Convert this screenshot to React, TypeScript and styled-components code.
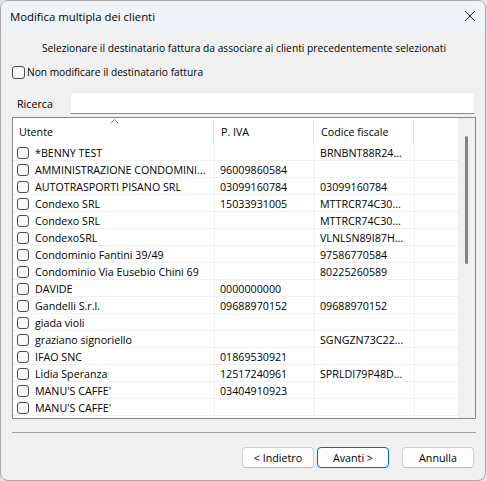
import styled, { createGlobalStyle } from "styled-components";

const GlobalStyle = createGlobalStyle`
  html, body {
    margin: 0;
    padding: 0;
    background: #e4e4e4;
  }
  body {
    font-family: "Open Sans", "Noto Sans", sans-serif;
    color: #000;
  }
`;

const FONT = `"Open Sans", "Noto Sans", sans-serif`;

type Row = {
  name: string;
  piva: string;
  cf: string;
};

const ROWS: Row[] = [
  { name: "*BENNY TEST", piva: "", cf: "BRNBNT88R24..." },
  { name: "AMMINISTRAZIONE CONDOMINI...", piva: "96009860584", cf: "" },
  { name: "AUTOTRASPORTI PISANO SRL", piva: "03099160784", cf: "03099160784" },
  { name: "Condexo SRL", piva: "15033931005", cf: "MTTRCR74C30..." },
  { name: "Condexo SRL", piva: "", cf: "MTTRCR74C30..." },
  { name: "CondexoSRL", piva: "", cf: "VLNLSN89I87H..." },
  { name: "Condominio Fantini 39/49", piva: "", cf: "97586770584" },
  { name: "Condominio Via Eusebio Chini 69", piva: "", cf: "80225260589" },
  { name: "DAVIDE", piva: "0000000000", cf: "" },
  { name: "Gandelli S.r.l.", piva: "09688970152", cf: "09688970152" },
  { name: "giada violi", piva: "", cf: "" },
  { name: "graziano signoriello", piva: "", cf: "SGNGZN73C22..." },
  { name: "IFAO SNC", piva: "01869530921", cf: "" },
  { name: "Lidia Speranza", piva: "12517240961", cf: "SPRLDI79P48D..." },
  { name: "MANU'S CAFFE'", piva: "03404910923", cf: "" },
  { name: "MANU'S CAFFE'", piva: "", cf: "" },
];

const COLS = "202px 100px 100px 43px";

const Window = styled.div`
  box-sizing: border-box;
  width: 486px;
  height: 481px;
  border: 1px solid #a9a9a9;
  border-radius: 8px;
  overflow: hidden;
  background: #f0f0f0;
  display: flex;
  flex-direction: column;
`;

const TitleBar = styled.div`
  height: 30px;
  flex: none;
  background: #eff4f9;
  display: flex;
  align-items: center;
  justify-content: space-between;
  padding: 0 8px 0 9px;
`;

const Title = styled.div`
  font-family: ${FONT};
  font-size: 11.35px;
  color: #000;
`;

const CloseButton = styled.div`
  width: 14px;
  height: 14px;
  display: flex;
  align-items: center;
  justify-content: center;
`;

const Content = styled.div`
  flex: 1;
  display: flex;
  flex-direction: column;
  padding: 0 9px 0 11px;
`;

const Instruction = styled.div`
  margin-top: 9px;
  height: 16px;
  line-height: 16px;
  text-align: center;
  font-family: ${FONT};
  font-size: 10.25px;
`;

const CheckRow = styled.label`
  margin-top: 9px;
  height: 14px;
  display: flex;
  align-items: center;
  gap: 2px;
  font-family: ${FONT};
  font-size: 10.2px;
`;

const Box = styled.span<{ $size: number }>`
  box-sizing: border-box;
  flex: none;
  width: ${(p) => p.$size}px;
  height: ${(p) => p.$size}px;
  border: 1px solid #4a4a4a;
  border-radius: 3px;
  background: #f9f9f9;
`;

const SearchRow = styled.div`
  margin-top: 13px;
  height: 22px;
  display: flex;
  align-items: center;
`;

const SearchLabel = styled.div`
  width: 53px;
  padding: 2px 0 0 5px;
  font-family: ${FONT};
  font-size: 10.7px;
`;

const SearchInput = styled.div`
  box-sizing: border-box;
  flex: 1;
  height: 22px;
  margin-right: 1px;
  background: #fff;
  border: 1px solid #ececec;
  border-bottom-color: #8a8a8a;
  border-radius: 3px 3px 0 0;
`;

const ListBox = styled.div`
  box-sizing: border-box;
  margin-top: 3px;
  height: 302px;
  border: 1px solid #828790;
  background: #fff;
  display: flex;
  overflow: hidden;
`;

const Table = styled.div`
  flex: 1;
  display: flex;
  flex-direction: column;
  overflow: hidden;
`;

const HeaderRow = styled.div`
  height: 26px;
  flex: none;
  display: grid;
  grid-template-columns: ${COLS};
`;

const HeaderCell = styled.div<{ $sep: boolean }>`
  position: relative;
  display: flex;
  align-items: center;
  padding: 1px 0 0 6px;
  font-family: ${FONT};
  font-size: 10.7px;
  &::after {
    content: "";
    display: ${(p) => (p.$sep ? "block" : "none")};
    position: absolute;
    right: 1px;
    top: 2px;
    bottom: 0;
    width: 1px;
    background: #e5e5e5;
  }
`;

const SortArrow = styled.svg`
  position: absolute;
  left: 97px;
  top: 1px;
`;

const DataRow = styled.div`
  box-sizing: border-box;
  height: 17px;
  flex: none;
  display: grid;
  grid-template-columns: ${COLS};
  border-bottom: 1px solid #f0f0f0;
`;

const Cell = styled.div<{ $sep: boolean }>`
  box-sizing: border-box;
  display: flex;
  align-items: center;
  gap: 6px;
  padding: 1px 0 0 5px;
  border-right: ${(p) => (p.$sep ? "1px solid #f0f0f0" : "none")};
  font-family: ${FONT};
  font-size: 10.7px;
  white-space: nowrap;
  overflow: hidden;
`;

const NameCell = styled(Cell)`
  padding-left: 4px;
`;

const ScrollTrack = styled.div`
  width: 17px;
  flex: none;
  background: #f0f0f0;
  padding-top: 18px;
  box-sizing: border-box;
`;

const ScrollThumb = styled.div`
  width: 3px;
  height: 128px;
  margin-left: 7px;
  border-radius: 2px;
  background: #858585;
`;

const Separator = styled.div`
  margin-top: 13px;
  height: 1px;
  background: #a0a0a0;
`;

const ButtonRow = styled.div`
  margin-top: 14px;
  margin-right: 2px;
  display: flex;
  justify-content: flex-end;
`;

const Button = styled.button<{ $primary?: boolean; $gap: number }>`
  box-sizing: border-box;
  width: 72px;
  height: 21px;
  margin-left: ${(p) => p.$gap}px;
  padding: 0;
  background: #fdfdfd;
  border: 1px solid ${(p) => (p.$primary ? "#0067c0" : "#d0d0d0")};
  border-bottom-color: ${(p) => (p.$primary ? "#0067c0" : "#b8b8b8")};
  border-radius: 4px;
  font-family: ${FONT};
  font-size: 10.7px;
  color: #000;
`;

export default function App() {
  return (
    <>
      <GlobalStyle />
      <Window>
        <TitleBar>
          <Title>Modifica multipla dei clienti</Title>
          <CloseButton>
            <svg width="12" height="12" viewBox="0 0 12 12">
              <path d="M1 1 L11 11 M11 1 L1 11" stroke="#1a1a1a" strokeWidth="1" />
            </svg>
          </CloseButton>
        </TitleBar>
        <Content>
          <Instruction>
            Selezionare il destinatario fattura da associare ai clienti precedentemente selezionati
          </Instruction>
          <CheckRow>
            <Box $size={13} />
            Non modificare il destinatario fattura
          </CheckRow>
          <SearchRow>
            <SearchLabel>Ricerca</SearchLabel>
            <SearchInput />
          </SearchRow>
          <ListBox>
            <Table>
              <HeaderRow>
                <HeaderCell $sep>
                  <SortArrow width="9" height="5" viewBox="0 0 9 5">
                    <path d="M0.5 4.5 L4.5 0.5 L8.5 4.5" fill="none" stroke="#8a8a8a" strokeWidth="1" />
                  </SortArrow>
                  Utente
                </HeaderCell>
                <HeaderCell $sep>P. IVA</HeaderCell>
                <HeaderCell $sep>Codice fiscale</HeaderCell>
                <HeaderCell $sep={false} />
              </HeaderRow>
              {ROWS.map((r, i) => (
                <DataRow key={i}>
                  <NameCell $sep>
                    <Box $size={12} />
                    {r.name}
                  </NameCell>
                  <Cell $sep>{r.piva}</Cell>
                  <Cell $sep>{r.cf}</Cell>
                  <Cell $sep={false} />
                </DataRow>
              ))}
            </Table>
            <ScrollTrack>
              <ScrollThumb />
            </ScrollTrack>
          </ListBox>
          <Separator />
          <ButtonRow>
            <Button $gap={0}>&lt; Indietro</Button>
            <Button $primary $gap={3}>Avanti &gt;</Button>
            <Button $gap={13}>Annulla</Button>
          </ButtonRow>
        </Content>
      </Window>
    </>
  );
}
